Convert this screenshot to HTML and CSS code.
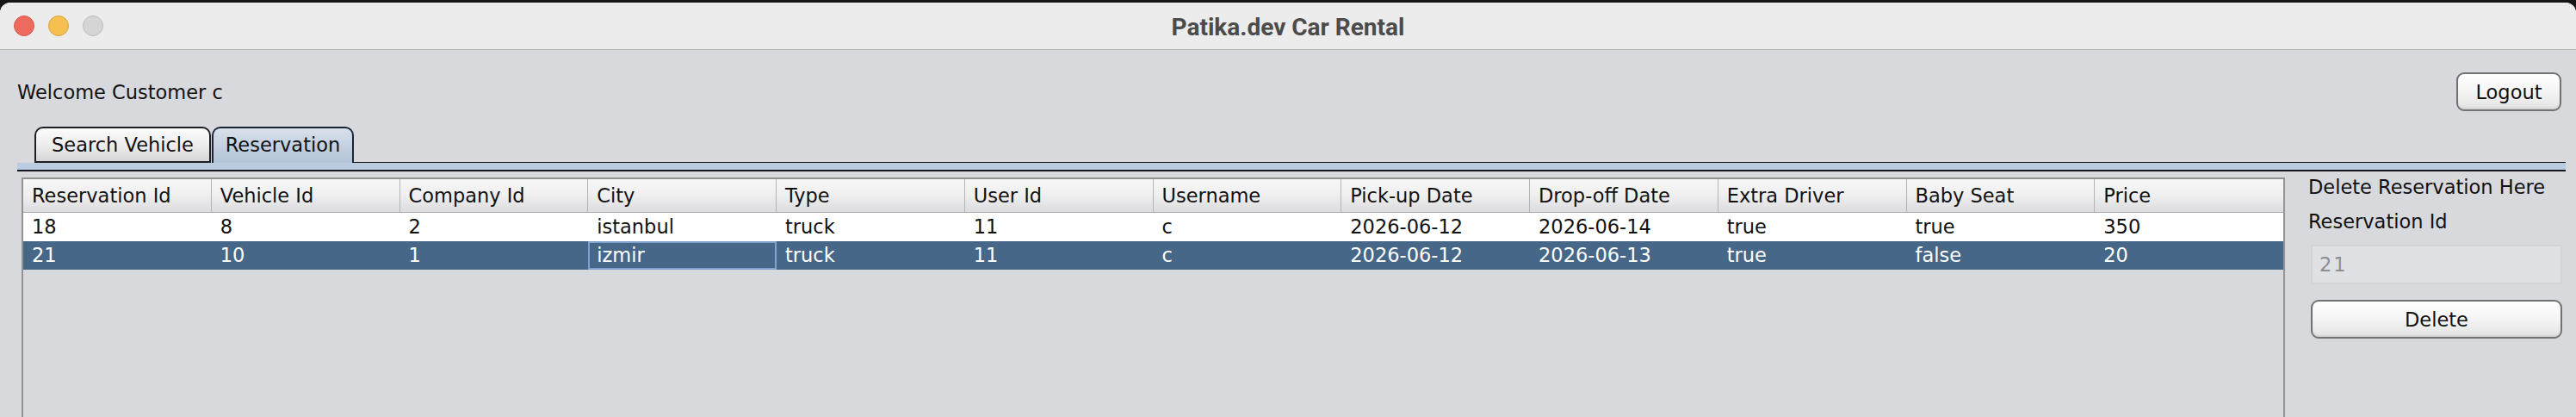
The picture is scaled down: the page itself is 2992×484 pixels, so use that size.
FILE: index.html
```html
<!DOCTYPE html>
<html lang="en">
<head>
<meta charset="utf-8">
<title>Patika.dev Car Rental</title>
<link rel="stylesheet" href="styles.css">
</head>
<body>
<div class="window">
  <div class="titlebar">
    <div class="lights">
      <span class="light red"></span>
      <span class="light yellow"></span>
      <span class="light gray"></span>
    </div>
    <div class="title">Patika.dev Car Rental</div>
  </div>
  <div class="content">
    <div class="topbar">
      <span class="label">Welcome Customer c</span>
      <button class="btn logout">Logout</button>
    </div>
    <div class="tabs">
      <div class="tab tab-search">Search Vehicle</div>
      <div class="tab selected">Reservation</div>
      <div class="tab-fill"></div>
    </div>
    <div class="band"></div>
    <div class="main">
      <div class="table">
        <div class="row head">
          <div class="cell">Reservation Id</div>
          <div class="cell">Vehicle Id</div>
          <div class="cell">Company Id</div>
          <div class="cell">City</div>
          <div class="cell">Type</div>
          <div class="cell">User Id</div>
          <div class="cell">Username</div>
          <div class="cell">Pick-up Date</div>
          <div class="cell">Drop-off Date</div>
          <div class="cell">Extra Driver</div>
          <div class="cell">Baby Seat</div>
          <div class="cell">Price</div>
        </div>
        <div class="row">
          <div class="cell">18</div>
          <div class="cell">8</div>
          <div class="cell">2</div>
          <div class="cell">istanbul</div>
          <div class="cell">truck</div>
          <div class="cell">11</div>
          <div class="cell">c</div>
          <div class="cell">2026-06-12</div>
          <div class="cell">2026-06-14</div>
          <div class="cell">true</div>
          <div class="cell">true</div>
          <div class="cell">350</div>
        </div>
        <div class="row sel">
          <div class="cell">21</div>
          <div class="cell">10</div>
          <div class="cell">1</div>
          <div class="cell focus">izmir</div>
          <div class="cell">truck</div>
          <div class="cell">11</div>
          <div class="cell">c</div>
          <div class="cell">2026-06-12</div>
          <div class="cell">2026-06-13</div>
          <div class="cell">true</div>
          <div class="cell">false</div>
          <div class="cell">20</div>
        </div>
      </div>
      <div class="side">
        <div class="label side-title">Delete Reservation Here</div>
        <div class="label side-label">Reservation Id</div>
        <div class="field">21</div>
        <button class="btn delete">Delete</button>
      </div>
    </div>
  </div>
</div>
</body>
</html>
```
FILE: styles.css
```css
* { box-sizing: border-box; }
html, body { margin: 0; padding: 0; }
body {
  background: #161616;
  width: 2992px;
  height: 484px;
  overflow: hidden;
  font-family: "DejaVu Sans", "Liberation Sans", sans-serif;
}
.window {
  margin-top: 3px;
  height: 481px;
  background: #d8d9dd;
  border-radius: 12px 12px 0 0;
  overflow: hidden;
}
.titlebar {
  position: relative;
  height: 55px;
  background: #ececec;
  border-bottom: 1px solid #b6b6b6;
  display: flex;
  align-items: center;
  justify-content: center;
}
.lights {
  position: absolute;
  left: 16px;
  top: 15px;
  display: flex;
  gap: 16px;
}
.light {
  width: 24px;
  height: 24px;
  border-radius: 50%;
  display: block;
}
.red { background: #ee6a5f; border: 1px solid #d4574c; }
.yellow { background: #f5c04f; border: 1px solid #d8a23e; }
.gray { background: #d5d5d5; border: 1px solid #bdbdbd; }
.title {
  font-family: "Roboto", "Inter", sans-serif;
  font-weight: 700;
  font-size: 28px;
  color: #4b4b4b;
  margin-top: 2px;
}
.content {
  padding: 0 12px 0 20px;
}
.label {
  font-size: 22.5px;
  color: #111;
  line-height: 26px;
}
.topbar {
  margin-top: 26px;
  height: 45px;
  display: flex;
  align-items: center;
  justify-content: space-between;
  padding-right: 5px;
}
.btn {
  font-family: "DejaVu Sans", "Liberation Sans", sans-serif;
  font-size: 22.5px;
  color: #111;
  border: 2px solid #727272;
  border-radius: 9px;
  background: linear-gradient(#ffffff 0%, #f6f6f6 45%, #e3e3e3 100%);
  box-shadow: inset 0 -2px 2px rgba(0,0,0,0.08);
  padding: 0;
}
.logout {
  width: 122px;
  height: 45px;
}
.tabs {
  margin-top: 18px;
  height: 42px;
  display: flex;
  padding-left: 20px;
}
.tab {
  height: 42px;
  font-size: 22.5px;
  line-height: 38px;
  color: #111;
  text-align: center;
  border: 2px solid #1e1f22;
  border-radius: 10px 10px 0 0;
  background: linear-gradient(#fbfbfb 0%, #ececec 55%, #d6d6d8 100%);
}
.tab-search {
  width: 205px;
}
.tab.selected {
  width: 165px;
  margin-left: 1px;
  border-color: #1b2434;
  border-bottom: none;
  background: linear-gradient(#d9e1ec 0%, #c2cfdf 55%, #b3c3d7 100%);
}
.tab-fill {
  flex: 1;
  border-bottom: 1px solid #12151b;
}
.band {
  height: 10px;
  background: #bccce0;
  border-bottom: 2px solid #14171d;
}
.main {
  margin-top: 7px;
  display: flex;
  height: 290px;
}
.table {
  margin-left: 5px;
  width: 2629px;
  height: 100%;
  border: 2px solid #939393;
  border-bottom: none;
  background: #d8d9dd;
}
.row {
  display: grid;
  grid-template-columns: repeat(12, 1fr);
  height: 33px;
  background: #ffffff;
}
.row.head {
  height: 39px;
  background: linear-gradient(#f7f7f7 0%, #efeff0 50%, #dcdcde 100%);
  border-bottom: 1px solid #a9a9a9;
}
.cell {
  font-size: 22.5px;
  color: #111;
  padding-left: 10px;
  line-height: 33px;
  white-space: nowrap;
  overflow: hidden;
}
.head .cell {
  line-height: 38px;
  border-right: 1px solid #b4b4b6;
}
.head .cell:last-child { border-right: none; }
.row.sel { background: #466787; }
.row.sel .cell { color: #ffffff; }
.cell.focus {
  border: 2px solid #7fa3cc;
  line-height: 29px;
  padding-left: 8px;
}
.side {
  margin-left: 27px;
  width: 295px;
  display: flex;
  flex-direction: column;
}
.side-title {
  line-height: 22px;
}
.side-label {
  margin-top: 18px;
  line-height: 22px;
}
.field {
  margin-top: 16px;
  margin-left: 3px;
  height: 46px;
  background: #e0e1e5;
  border: 2px solid #d3d4d8;
  color: #8e8e8e;
  font-size: 22.5px;
  letter-spacing: 2px;
  line-height: 42px;
  padding-left: 8px;
}
.delete {
  margin-top: 18px;
  margin-left: 3px;
  height: 45px;
  width: 292px;
}
```
